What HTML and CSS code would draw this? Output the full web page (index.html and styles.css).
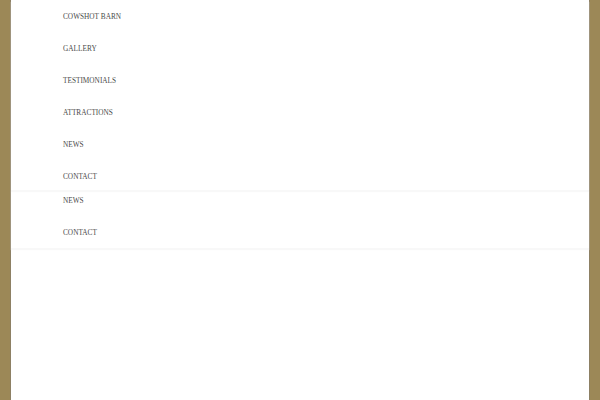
FILE: index.html
```html
<!DOCTYPE html>
<html lang="en">
<head>
	<meta charset="UTF-8">
	<title>Cowshot Barn</title>
	<link rel="stylesheet" href="styles.css">
</head>
<body>

<div class="page">
	<!--主菜单-->
	<ul class="menu">
		<li><a href="#">COWSHOT BARN</a></li>
		<li><a href="#">GALLERY</a></li>
		<li><a href="#">TESTIMONIALS</a></li>
		<li><a href="#">ATTRACTIONS</a></li>
		<li><a href="#">NEWS</a></li>
		<li><a href="#">CONTACT</a></li>
	</ul>
	<!--下拉菜单-->
	<ul class="menu menu-sub">
		<li><a href="#">NEWS</a></li>
		<li><a href="#">CONTACT</a></li>
	</ul>
</div>

</body>
</html>
```

FILE: styles.css
```css
*{margin: 0;padding: 0;}
ul{list-style: none;}
html,body{height: 100%;}
body{
	background-color: #9c8857;
	font-family: "Liberation Serif", "DejaVu Serif", serif;
}
/*白色内容区*/
.page{
	width: 578px;
	min-height: 100%;
	margin: 0 auto;
	background-color: #fff;
	border-left: 1px solid #8d8064;
	border-right: 1px solid #8d8064;
}
.menu{
	box-shadow: 0 2px 1px #f8f8f8;
}
.menu li{
	padding: 6px 0 10px 52px;
	line-height: 16px;
	height: 16px;
}
.menu li:last-child{
	padding-bottom: 8px;
}
.menu a{
	font-size: 7.3px;
	color: #4a4a4a;
	text-decoration: none;
}
.menu-sub li{
	padding: 0 0 16px 52px;
}
.menu-sub li:first-child{
	padding-top: 0;
}
.menu-sub li:last-child{
	padding-bottom: 10px;
}
```
